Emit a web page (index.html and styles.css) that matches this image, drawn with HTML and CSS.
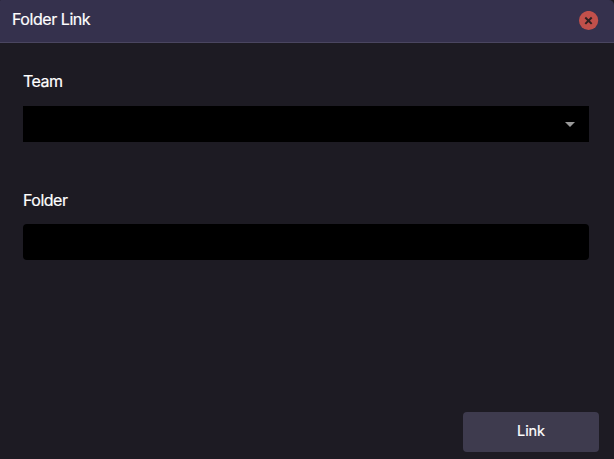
FILE: index.html
```html
<!DOCTYPE html>
<html lang="en">
  <head>
    <meta charset="UTF-8" />
    <meta name="viewport" content="width=device-width, initial-scale=1.0" />
    <title>Folder Link</title>
    <link rel="stylesheet" href="styles.css">
  </head>
  <body>
    <div class="dialog">
      <div class="header">
        <span class="title">Folder Link</span>
        <button class="close" type="button" aria-label="Close">
          <svg width="20" height="20" viewBox="0 0 20 20">
            <circle cx="9.6" cy="9.5" r="9.6" fill="#c1504b" />
            <path d="M6.3 6.5l6.4 6.4M12.7 6.5l-6.4 6.4" stroke="#2e2022" stroke-width="2" />
          </svg>
        </button>
      </div>
      <form class="content">
        <label class="label" for="team">Team</label>
        <div class="select" id="team" tabindex="0">
          <span class="arrow"></span>
        </div>
        <label class="label folder-label" for="folder">Folder</label>
        <input class="input" type="text" id="folder" />
      </form>
      <div class="footer">
        <button class="link-button" type="button">Link</button>
      </div>
    </div>
  </body>
</html>
```
FILE: styles.css
```css
* {
  box-sizing: border-box;
}

body {
  font-family: Inter, sans-serif;
  margin: 0;
  background-color: #1d1b23;
  color: #fff;
}

.dialog {
  display: flex;
  flex-direction: column;
  height: 459px;
}

.header {
  display: flex;
  justify-content: space-between;
  align-items: center;
  height: 43px;
  padding: 0 15px 1px 12px;
  background-color: #35314d;
  border-bottom: 1px solid #4a4660;
  border-radius: 1px 5px 0 0;
}

.title {
  font-size: 16px;
  line-height: 20px;
  letter-spacing: -0.45px;
  padding-bottom: 3px;
  -webkit-text-stroke: 0.2px #fff;
}

.close {
  display: flex;
  padding: 0;
  border: none;
  background: none;
  cursor: pointer;
}

.content {
  display: flex;
  flex-direction: column;
  flex: 1;
  padding: 28px 25px 0 23px;
}

.label {
  font-size: 16px;
  line-height: 20px;
  letter-spacing: -0.5px;
  margin-bottom: 15px;
  -webkit-text-stroke: 0.2px #fff;
}

.folder-label {
  margin-bottom: 14px;
}

.select {
  display: flex;
  justify-content: flex-end;
  align-items: center;
  height: 36px;
  padding-right: 14px;
  margin-bottom: 48px;
  background-color: #000;
}

.arrow {
  border-left: 5px solid transparent;
  border-right: 5px solid transparent;
  border-top: 5px solid #999;
}

.input {
  height: 36px;
  padding: 0 10px;
  border: none;
  border-radius: 4px;
  background-color: #000;
  color: #fff;
}

.footer {
  display: flex;
  justify-content: flex-end;
  padding: 0 15px 7px;
}

.link-button {
  width: 136px;
  height: 40px;
  padding: 0 0 3px;
  border: none;
  border-radius: 4px;
  background-color: #3e3b4e;
  color: #fff;
  font-family: inherit;
  font-size: 14.5px;
  letter-spacing: -0.1px;
  -webkit-text-stroke: 0.2px #fff;
  cursor: pointer;
}
```
